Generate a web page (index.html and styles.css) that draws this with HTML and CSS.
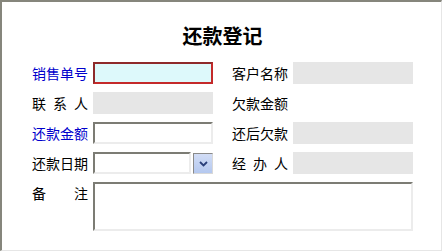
FILE: index.html
```html
<!DOCTYPE html>
<html lang="zh-CN">
<head>
<meta charset="utf-8">
<title>还款登记</title>
<link rel="stylesheet" href="styles.css">
</head>
<body>
<div class="frame">
  <h1 class="title">还款登记</h1>
  <div class="form">
    <label class="lbl req">销售单号</label>
    <div class="cell"><input class="box focus" type="text"></div>
    <label class="lbl">客户名称</label>
    <div class="cell"><input class="box ro" type="text" readonly></div>

    <label class="lbl spread"><span>联</span><span>系</span><span>人</span></label>
    <div class="cell"><input class="box ro" type="text" readonly></div>
    <label class="lbl">欠款金额</label>
    <div class="cell"></div>

    <label class="lbl req">还款金额</label>
    <div class="cell"><input class="box inset" type="text"></div>
    <label class="lbl">还后欠款</label>
    <div class="cell"><input class="box ro" type="text" readonly></div>

    <label class="lbl">还款日期</label>
    <div class="cell date">
      <input class="box inset datebox" type="text">
      <span class="drop"><svg width="9" height="6" viewBox="0 0 9 6"><path d="M1 1 L4.5 4.5 L8 1" fill="none" stroke="#2a3f7a" stroke-width="1.8"/></svg></span>
    </div>
    <label class="lbl spread"><span>经</span><span>办</span><span>人</span></label>
    <div class="cell"><input class="box ro" type="text" readonly></div>

    <label class="lbl spread top"><span>备</span><span>注</span></label>
    <div class="cell wide"><textarea class="memo"></textarea></div>
  </div>
</div>
</body>
</html>
```

FILE: styles.css
```css
html, body {
  margin: 0;
  padding: 0;
  background: #ffffff;
}
.frame {
  box-sizing: border-box;
  width: 442px;
  height: 251px;
  background: #ffffff;
  border-top: 2px solid #86867c;
  border-left: 2px solid #86867c;
  border-right: 1px solid #e6e6e6;
  border-bottom: 1px solid #e6e6e6;
  padding: 22px 0 0 30px;
  font-family: "Noto Sans CJK SC", "Noto Sans", sans-serif;
  font-size: 14px;
  color: #000;
}
.title {
  margin: 0 0 14px -30px;
  text-align: center;
  font-size: 20px;
  line-height: 24px;
  font-weight: bold;
  padding-left: 2px;
}
.form {
  display: grid;
  grid-template-columns: 56px 134px 56px 120px;
  grid-auto-rows: 22px;
  column-gap: 5px;
  row-gap: 8px;
}
.lbl {
  line-height: 22px;
  height: 22px;
  white-space: nowrap;
}
.lbl.req {
  color: #0000cc;
}
.lbl.spread {
  display: flex;
  justify-content: space-between;
}
.lbl.top {
  align-self: start;
}
.cell {
  display: flex;
  align-items: stretch;
}
.box {
  box-sizing: border-box;
  width: 120px;
  height: 22px;
  margin: 0;
  padding: 0 2px;
  font: inherit;
  outline: none;
}
.box.focus {
  background: #ddf9fb;
  border: 2px solid;
  border-color: #8e2a2a #c42a2a #c42a2a #8e2a2a;
}
.box.ro {
  background: #e6e6e6;
  border: 1px solid #e6e6e6;
}
.box.inset {
  background: #ffffff;
  border: 2px solid;
  border-color: #7c7c74 #ececec #ececec #7c7c74;
}
.date {
  gap: 2px;
}
.box.datebox {
  width: 98px;
}
.drop {
  box-sizing: border-box;
  width: 20px;
  height: 21px;
  margin-top: 1px;
  border: 1px solid;
  border-color: #8a8a8a #d8d8d8 #d8d8d8 #8a8a8a;
  background: linear-gradient(#d2ddf6, #b4c8ef);
  display: flex;
  align-items: center;
  justify-content: center;
}
.wide {
  grid-column: 2 / 5;
  height: 49px;
}
.memo {
  box-sizing: border-box;
  width: 320px;
  height: 49px;
  margin: 0;
  padding: 2px;
  resize: none;
  font: inherit;
  outline: none;
  background: #ffffff;
  border: 2px solid;
  border-color: #7c7c74 #ececec #ececec #7c7c74;
}
```
